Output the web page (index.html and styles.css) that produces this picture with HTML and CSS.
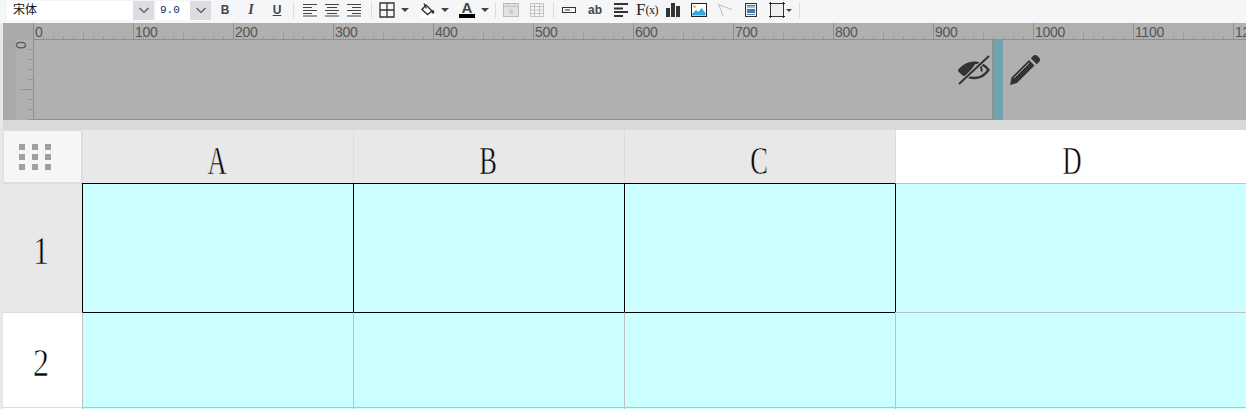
FILE: index.html
```html
<!DOCTYPE html>
<html lang="zh-CN">
<head>
  <meta charset="UTF-8">
  <title>报表设计</title>
  <link rel="stylesheet" href="styles.css">
</head>
<body>
  <!-- toolbar -->
  <div class="toolbar">
    <div class="select font-select"><span class="select-value">宋体</span><span class="select-arrow"><svg width="12" height="7" viewBox="0 0 12 7"><path d="M1.500 1l4.500 4.500L10.500 1" fill="none" stroke="#555" stroke-width="1.200"/></svg></span></div>
    <div class="select size-select"><span class="select-value size-value">9.0</span><span class="select-arrow"><svg width="12" height="7" viewBox="0 0 12 7"><path d="M1.500 1l4.500 4.500L10.500 1" fill="none" stroke="#555" stroke-width="1.200"/></svg></span></div>

    <button class="tool tool-text bold">B</button>
    <button class="tool tool-text italic">I</button>
    <button class="tool tool-text underline">U</button>
    <span class="sep sep-first"></span>

    <button class="tool tool-align"><svg width="14" height="14" viewBox="0 0 14 14"><path d="M0 1.500h14M0 4.500h9M0 7.500h14M0 10.500h9M0 13h14" stroke="#444" stroke-width="1.100"/></svg></button>
    <button class="tool tool-align"><svg width="14" height="14" viewBox="0 0 14 14"><path d="M0 1.500h14M2 4.500h10M0 7.500h14M2 10.500h10M0 13h14" stroke="#444" stroke-width="1.100"/></svg></button>
    <button class="tool tool-align"><svg width="14" height="14" viewBox="0 0 14 14"><path d="M0 1.500h14M5 4.500h9M0 7.500h14M5 10.500h9M0 13h14" stroke="#444" stroke-width="1.100"/></svg></button>
    <span class="sep sep-align"></span>

    <div class="tool-drop">
      <svg width="16" height="16" viewBox="0 0 16 16"><path d="M1 1h14v14H1zM8 1v14M1 8h14" fill="none" stroke="#333" stroke-width="1.300"/></svg>
      <span class="caret"></span>
    </div>
    <div class="tool-drop">
      <svg width="16" height="16" viewBox="0 0 16 16"><rect y="12" width="16" height="4" fill="#fff"/><path d="M7 3l6 6-4.500 3.500L3 7.500z" fill="#fff" stroke="#333" stroke-width="1.400"/><path d="M5 1.500l2.500 5" stroke="#333" stroke-width="1.300"/><path d="M14 7.500c.9 1.400 1.400 2.100 1.400 2.800a1.400 1.400 0 0 1-2.800 0c0-.7.500-1.400 1.400-2.800z" fill="#333"/></svg>
      <span class="caret"></span>
    </div>
    <div class="tool-drop">
      <span class="font-color">A</span>
      <span class="caret"></span>
    </div>
    <span class="sep sep-drop"></span>

    <button class="tool tool-plain"><svg width="16" height="14" viewBox="0 0 16 14"><rect x=".5" y=".5" width="15" height="13" fill="#e2e2e2" stroke="#bbb"/><path d="M1 3.500h14M4.500 1v3M11.500 1v3" stroke="#c4c4c4"/><rect x="6" y="6" width="4" height="5" fill="#cfcfcf"/></svg></button>
    <button class="tool tool-grid"><svg width="14" height="14" viewBox="0 0 14 14"><path d="M.5.500h13v13H.500zM.5 3.500h13M.5 7h13M.5 10.500h13M4.500.500v13M9.500.500v13" fill="none" stroke="#c2c2c2"/></svg></button>
    <span class="sep sep-plain"></span>

    <button class="tool tool-wide"><svg width="14" height="6" viewBox="0 0 14 6"><rect x=".5" y=".5" width="13" height="5" fill="none" stroke="#333"/><path d="M3 3h5" stroke="#333"/></svg></button>
    <button class="tool tool-wide tool-ab">ab</button>
    <button class="tool tool-wide"><svg width="14" height="14" viewBox="0 0 14 14"><path d="M0 1h14M0 5.500h9M0 9h14M0 13h9" stroke="#333" stroke-width="1.800"/></svg></button>
    <button class="tool tool-wide tool-fx">F<small>(x)</small></button>
    <button class="tool tool-wide"><svg width="14" height="14" viewBox="0 0 14 14"><path d="M0 5h4v9H0zM5 0h4v14H5zM10 3h4v11h-4z" fill="#333"/></svg></button>
    <button class="tool tool-wide"><svg width="16" height="14" viewBox="0 0 16 14"><rect x=".5" y=".5" width="15" height="13" fill="#fff" stroke="#222"/><circle cx="3.500" cy="3.500" r="1.500" fill="#f2c037"/><path d="M1 11l4-4 2.500 2 3-4 4 5v2.500H1z" fill="#2fa8e0"/></svg></button>
    <button class="tool tool-wide"><svg width="14" height="12" viewBox="0 0 14 12"><path d="M0 .5l14 5M.5 0L5 12" fill="none" stroke="#bdbdbd"/></svg></button>
    <button class="tool tool-wide"><svg width="12" height="14" viewBox="0 0 12 14"><rect x=".5" y=".5" width="11" height="13" fill="#f4f4f4" stroke="#333"/><path d="M2 2.500h8M2 4h8M2 11.500h8" stroke="#777"/><rect x="2" y="6" width="8" height="4" fill="#2f80cc"/></svg></button>

    <div class="tool-box">
      <svg width="16" height="16" viewBox="0 0 16 16"><rect x="1.500" y="1.500" width="13" height="13" fill="#f0f0f0" stroke="#333"/><path d="M0 1.500h3M1.500 0v3M13 1.500h3M14.500 0v3M0 14.500h3M1.500 13v3M13 14.500h3M14.500 13v3" stroke="#222"/></svg>
      <span class="caret caret-small"></span>
    </div>
    <span class="sep sep-box"></span>
  </div>

  <!-- ruler and band preview -->
  <div class="design">
    <div class="ruler-corner"></div>
    <div class="ruler-top">
      <span>0</span><span>100</span><span>200</span><span>300</span><span>400</span><span>500</span><span>600</span>
      <span>700</span><span>800</span><span>900</span><span>1000</span><span>1100</span><span>1200</span>
    </div>
    <div class="ruler-margin"></div>
    <div class="ruler-left"><span class="ruler-zero">0</span></div>
    <div class="band">
      <div class="canvas">
        <svg class="eye" width="32" height="30" viewBox="0 0 32 30">
          <path d="M1 15.500C6 9.500 12 7.500 18 7.800c5 .3 9.500 3.200 12.500 7.200-3.500 5-8 7.800-13.500 8-6.500.2-12-3-16-7.500z" fill="none" stroke="#333" stroke-width="2.400"/>
          <path d="M2 15.500C6 10 12 8 18 8.200L8 21.500C5.500 20 3.500 18 2 15.500z" fill="#333"/>
          <path d="M21 10c2 1.500 3 4 2.500 6.500" fill="none" stroke="#333" stroke-width="2"/>
          <path d="M1 29L31 1" stroke="#b0b0b0" stroke-width="4"/>
          <path d="M1 29L31 1" stroke="#333" stroke-width="2"/>
        </svg>
      </div>
      <div class="band-handle"></div>
      <svg class="pencil" width="31" height="31" viewBox="0 0 31 31">
        <path d="M1 30l1.500-7.500L20 5l5.500 5.500L8 28z" fill="#333"/>
        <path d="M21.800 3.200l2-2a3.500 3.500 0 0 1 5 0l1 1a3.500 3.500 0 0 1 0 5l-2 2z" fill="#333"/>
        <path d="M5 23l15-15" stroke="#b0b0b0" stroke-width="1"/>
      </svg>
    </div>
  </div>
  <div class="gap"></div>

  <!-- sheet -->
  <div class="sheet">
    <div class="corner">
      <div class="corner-dots"><i></i><i></i><i></i><i></i><i></i><i></i><i></i><i></i><i></i></div>
    </div>
    <div class="col-head on"><span class="glyph">A</span></div>
    <div class="col-head on"><span class="glyph">B</span></div>
    <div class="col-head on"><span class="glyph">C</span></div>
    <div class="col-head"><span class="glyph">D</span></div>

    <div class="row-head on"><span class="glyph glyph-num">1</span></div>
    <div class="cell sel sel-first"></div>
    <div class="cell sel"></div>
    <div class="cell sel"></div>
    <div class="cell sel-after"></div>

    <div class="row-head"><span class="glyph glyph-num">2</span></div>
    <div class="cell under-sel"></div>
    <div class="cell under-sel"></div>
    <div class="cell under-sel"></div>
    <div class="cell"></div>

    <div class="row-head"></div>
    <div class="cell"></div>
    <div class="cell"></div>
    <div class="cell"></div>
    <div class="cell"></div>
  </div>
</body>
</html>
```

FILE: styles.css
```css
html, body {
  height: 100%;
}

body {
  margin: 0;
  overflow: hidden;
  background: #e8e8e8;
  font-family: "Liberation Sans", "Noto Sans CJK SC", sans-serif;
}

/* toolbar */
.toolbar {
  display: flex;
  align-items: center;
  height: 23px;
  box-sizing: border-box;
  padding: 0 0 3px 7px;
  background: #f5f6f8;
  overflow: hidden;
}

.select {
  display: flex;
  height: 19px;
  flex: none;
}

.font-select { width: 147px; }
.size-select { width: 55px; margin-left: 2px; }

.select-value {
  flex: 1;
  padding-left: 6px;
  background: #fff;
  font-size: 12px;
  line-height: 19px;
  color: #111;
}

.size-value {
  padding-left: 4px;
  font-family: "Liberation Mono", monospace;
  font-size: 11px;
  color: #0c2a6a;
}

.select-arrow {
  display: flex;
  align-items: center;
  justify-content: center;
  width: 21px;
  background: #dcdde0;
}

.tool {
  display: flex;
  align-items: center;
  justify-content: center;
  flex: none;
  width: 26px;
  height: 20px;
  padding: 0;
  border: 0;
  background: none;
}

.tool-text {
  font-family: "Liberation Sans", sans-serif;
  font-size: 12px;
  font-weight: bold;
  color: #444;
}

.bold { margin-left: 1px; }
.italic { font-family: "Liberation Serif", serif; font-style: italic; font-size: 14px; }
.underline { text-decoration: underline; }

.tool-align { width: 22px; }
.tool-plain { width: 24px; }
.tool-grid { width: 28px; }
.tool-wide { width: 26px; }

.tool-ab {
  font-size: 12px;
  font-weight: bold;
  color: #444;
}

.tool-fx {
  font-family: "Liberation Serif", serif;
  font-size: 17px;
  color: #222;
}

.tool-fx small {
  font-size: 12px;
  letter-spacing: -.5px;
}

.tool-drop {
  display: flex;
  align-items: center;
  gap: 6px;
  flex: none;
  width: 40px;
}

.tool-box {
  display: flex;
  align-items: center;
  gap: 1px;
  flex: none;
  margin-left: 5px;
}

.caret {
  width: 0;
  height: 0;
  border-left: 4px solid transparent;
  border-right: 4px solid transparent;
  border-top: 4px solid #444;
}

.caret-small {
  border-left-width: 3px;
  border-right-width: 3px;
  border-top-width: 3px;
}

.font-color {
  width: 16px;
  height: 16px;
  box-sizing: border-box;
  border-bottom: 4px solid #000;
  font-size: 15px;
  font-weight: bold;
  line-height: 12px;
  text-align: center;
  color: #444;
}

.sep {
  flex: none;
  width: 1px;
  height: 16px;
  background: #dcdcdc;
}

.sep-first { margin: 0 5px 0 3px; }
.sep-align { margin: 0 7px 0 6px; }
.sep-drop { margin: 0 3px 0 -4px; }
.sep-plain { margin: 0 2px 0 2px; }
.sep-box { margin-left: 7px; }

/* ruler + band preview */
.design {
  display: grid;
  grid-template-columns: 13px 17px 1fr;
  grid-template-rows: 17px 80px;
  margin-left: 3px;
  height: 97px;
  background: #b0b0b0;
  overflow: hidden;
}

.ruler-corner {
  grid-column: 1 / 3;
  background: #aaa;
}

.ruler-margin {
  background: #a9a9a9;
}

.ruler-top {
  display: flex;
  box-sizing: border-box;
  border-bottom: 1px solid #8f8f8f;
  background:
    repeating-linear-gradient(90deg, #9a9a9a 0 1px, transparent 1px 10px) left bottom / 100% 3px no-repeat,
    repeating-linear-gradient(90deg, #9a9a9a 0 1px, transparent 1px 50px) left bottom / 100% 8px no-repeat;
}

.ruler-top span {
  flex: none;
  width: 100px;
  box-sizing: border-box;
  padding-left: 1px;
  border-left: 1px solid #8f8f8f;
  font-size: 14px;
  line-height: 19px;
  letter-spacing: -.3px;
  color: #555;
}

.ruler-left {
  position: relative;
  box-sizing: border-box;
  background:
    repeating-linear-gradient(180deg, transparent 0 9px, #959595 9px 10px) right top / 5px 100% no-repeat,
    linear-gradient(#959595, #959595) right 49px / 12px 1px no-repeat;
}

.ruler-zero {
  position: absolute;
  left: 1px;
  top: -2px;
  font-size: 14px;
  line-height: 14px;
  color: #555;
  transform: rotate(-90deg);
}

.band {
  display: flex;
  align-items: stretch;
}

.canvas {
  display: flex;
  justify-content: flex-end;
  align-items: flex-start;
  flex: none;
  width: 960px;
  box-sizing: border-box;
  padding-right: 2px;
  border-left: 1px solid #8f8f8f;
  border-right: 1px solid #8f8f8f;
  border-bottom: 1px solid #8f8f8f;
}

.eye {
  margin-top: 15px;
}

.band-handle {
  flex: none;
  width: 10px;
  background: #6fa3b0;
}

.pencil {
  flex: none;
  margin: 15px 0 0 6px;
}

.gap {
  height: 10px;
  margin-left: 3px;
  background: #d9d9db;
}

/* sheet */
.sheet {
  display: grid;
  grid-template-columns: 79px 271px 271px 271px 354px;
  grid-template-rows: 53px 129px 95px 10px;
  margin-left: 3px;
}

.corner {
  display: flex;
  align-items: center;
  box-sizing: border-box;
  padding-left: 15px;
  border: 1px solid #dedede;
  background: #f5f6f8;
}

.corner-dots {
  display: grid;
  grid-template-columns: repeat(3, 6px);
  grid-template-rows: repeat(3, 6px);
  gap: 4px 7px;
}

.corner-dots i {
  background: #a0a0a0;
}

.col-head, .row-head {
  display: flex;
  align-items: center;
  justify-content: center;
  box-sizing: border-box;
  background: #fff;
  --head-bg: #fff;
}

.col-head {
  border-left: 1px solid #dcdcdc;
}

.row-head {
  padding-right: 4px;
  border-top: 1px solid #dcdcdc;
}

.col-head.on, .row-head.on {
  background: #e8e8e8;
  --head-bg: #e8e8e8;
}

.col-head.on {
  padding-right: 2px;
}

/* the sheet font is much thinner than Liberation Serif: the stroke eats into the glyph */
.glyph {
  display: block;
  margin-top: 8px;
  font-family: "Liberation Serif", serif;
  font-size: 39px;
  line-height: 39px;
  color: #000;
  -webkit-text-stroke: .6px var(--head-bg);
  transform: scaleX(.68);
}

.glyph-num {
  margin-top: 5px;
  font-size: 40px;
  transform: scaleX(.8);
}

.cell {
  box-sizing: border-box;
  border-left: 1px solid #c0c0c0;
  border-top: 1px solid #c0c0c0;
  background: #ccffff;
}

.sel {
  border-left-color: #000;
  border-top-color: #000;
}

.sel-after {
  border-left-color: #000;
}

.under-sel {
  border-top-color: #000;
}
```
